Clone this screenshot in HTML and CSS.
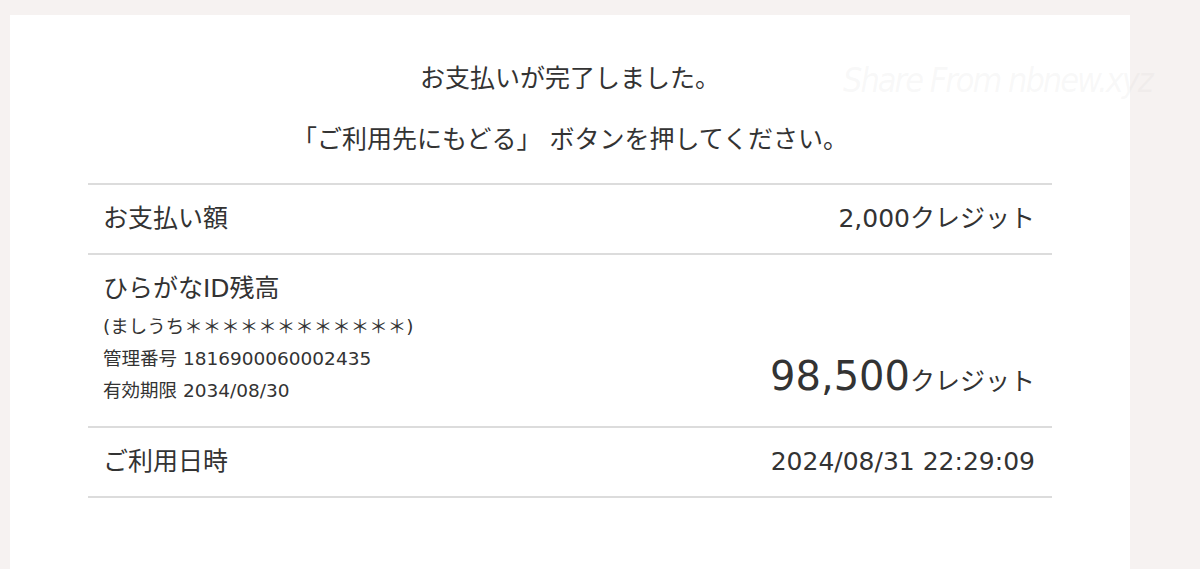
FILE: index.html
```html
<!DOCTYPE html>
<html lang="ja">
<head>
<meta charset="utf-8">
<link rel="stylesheet" href="styles.css">
</head>
<body>
<div class="page">
  <main class="card">
    <div class="message">
      <p>お支払いが完了しました。</p>
      <p>「ご利用先にもどる」 ボタンを押してください。</p>
    </div>
    <div class="table">
      <div class="row">
        <div class="label">お支払い額</div>
        <div class="value">2,000クレジット</div>
      </div>
      <div class="row row-tall">
        <div class="info">
          <div class="label">ひらがなID残高</div>
          <div class="sub">(ましうち＊＊＊＊＊＊＊＊＊＊＊＊)</div>
          <div class="sub">管理番号 1816900060002435</div>
          <div class="sub">有効期限 2034/08/30</div>
        </div>
        <div class="value balance"><span class="big">98,500</span>クレジット</div>
      </div>
      <div class="row">
        <div class="label">ご利用日時</div>
        <div class="value">2024/08/31 22:29:09</div>
      </div>
    </div>
  </main>
  <div class="watermark">Share From nbnew.xyz</div>
</div>
</body>
</html>
```

FILE: styles.css
```css
html, body {
  margin: 0;
  padding: 0;
  height: 100%;
}
body {
  background: #f6f2f1;
  font-family: "DejaVu Sans", "Noto Sans CJK JP", sans-serif;
  color: #333;
}
.page {
  position: relative;
  height: 100%;
  padding: 15px 70px 0 10px;
  box-sizing: border-box;
  display: flex;
}
.card {
  flex: 1;
  background: #fff;
  padding: 46px 78px 0;
}
.message {
  text-align: center;
  font-size: 25px;
  line-height: 36px;
}
.message p {
  margin: 0 0 25px;
}
.table {
  border-top: 2px solid #dcdcdc;
}
.row {
  display: flex;
  justify-content: space-between;
  align-items: center;
  padding: 16px 17px 16px 15px;
  border-bottom: 2px solid #dcdcdc;
  font-size: 25px;
  line-height: 36px;
}
.row-tall {
  align-items: flex-end;
  padding-bottom: 19px;
}
.sub {
  font-size: 18.5px;
  line-height: 32px;
}
.info .label {
  margin-bottom: 4px;
}
.balance {
  margin-bottom: 5px;
  line-height: 40px;
}
.big {
  font-size: 40px;
}
.watermark {
  position: absolute;
  left: 843px;
  top: 60px;
  white-space: nowrap;
  font-family: "DejaVu Sans Condensed", "DejaVu Sans", sans-serif;
  font-stretch: condensed;
  font-style: italic;
  font-size: 34px;
  letter-spacing: -2px;
  color: rgba(200, 200, 200, 0.13);
  pointer-events: none;
}
```
